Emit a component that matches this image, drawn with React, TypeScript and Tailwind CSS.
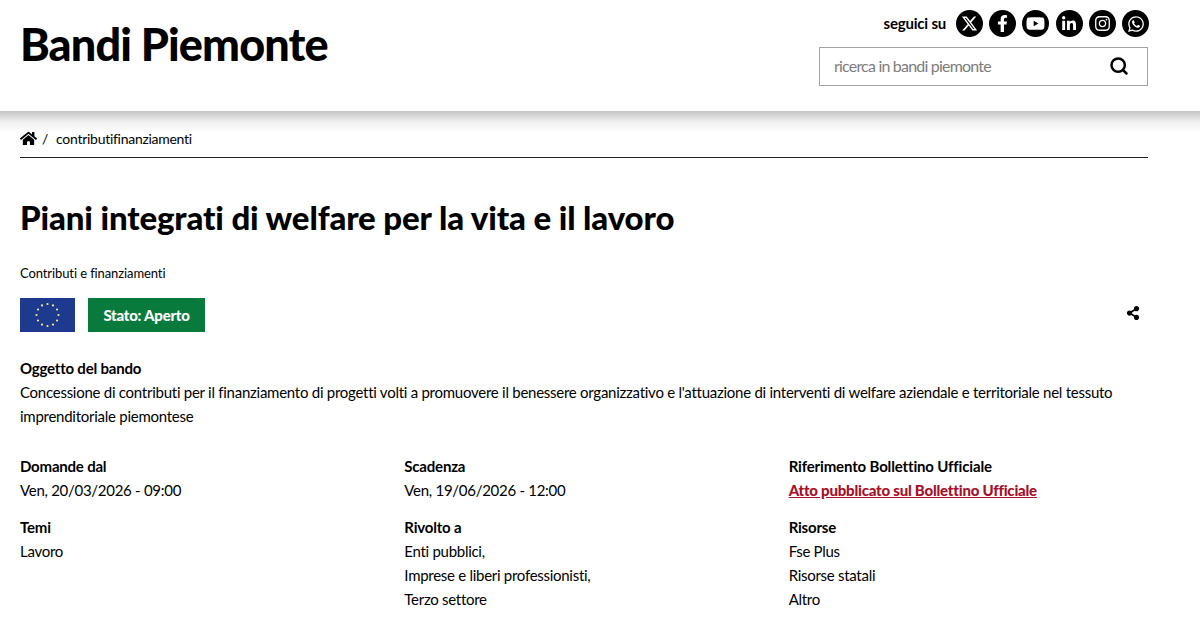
import React from 'react';
import { FaFacebookF, FaHome, FaInstagram, FaLinkedinIn, FaShareAlt, FaWhatsapp, FaYoutube } from 'react-icons/fa';
import { FaXTwitter } from 'react-icons/fa6';
import { Search } from 'lucide-react';

const socials = [
  { name: 'X', icon: <FaXTwitter size={17} /> },
  { name: 'Facebook', icon: <FaFacebookF size={17} /> },
  { name: 'YouTube', icon: <FaYoutube size={19} /> },
  { name: 'LinkedIn', icon: <FaLinkedinIn size={16} /> },
  { name: 'Instagram', icon: <FaInstagram size={17} /> },
  { name: 'WhatsApp', icon: <FaWhatsapp size={18} /> },
];

const EuFlag: React.FC = () => {
  const stars = Array.from({ length: 12 }, (_, i) => {
    const a = (i * Math.PI) / 6;
    return { x: 27.5 + 11 * Math.sin(a), y: 17 - 11 * Math.cos(a) };
  });
  return (
    <svg width="55" height="34" viewBox="0 0 55 34" className="block">
      <rect width="55" height="34" fill="#1d3a8f" />
      {stars.map((s, i) => (
        <circle key={i} cx={s.x} cy={s.y} r="1.1" fill="#f7eb8a" />
      ))}
    </svg>
  );
};

const Field: React.FC<{ label: string; lines: string[] }> = ({ label, lines }) => (
  <div>
    <div className="font-bold leading-6 tracking-[-0.2px]">{label}</div>
    {lines.map((line) => (
      <div key={line} className="leading-6 tracking-[-0.28px]">{line}</div>
    ))}
  </div>
);

export default function App() {
  return (
    <div className="h-[642px] overflow-hidden bg-white text-[15px] text-black font-['Lato','Liberation_Sans',sans-serif]">
      <header className="h-[111px] px-5 flex justify-between bg-white">
        <h1 className="mt-[14px] text-[45px] leading-[60px] font-black tracking-[-0.9px]">Bandi Piemonte</h1>
        <div className="w-[330px] mr-[32px] pt-[10px] flex flex-col items-end">
          <div className="flex items-center h-[27px] -mr-px">
            <span className="mr-[10px] text-[15px] font-bold tracking-[-0.2px]">seguici su</span>
            <div className="flex gap-[6.2px]">
              {socials.map((s) => (
                <a key={s.name} href="#" aria-label={s.name} className="w-[27px] h-[27px] rounded-full bg-black text-white flex items-center justify-center">
                  {s.icon}
                </a>
              ))}
            </div>
          </div>
          <div className="mt-[10px] w-[329px] h-[39px] border border-[#a3a3a3] pl-[14px] pr-[18px] pb-[2px] flex items-center justify-between">
            <span className="text-[16px] tracking-[-0.8px] text-[#7d7d7d]">ricerca in bandi piemonte</span>
            <Search size={20} strokeWidth={3} />
          </div>
        </div>
      </header>

      <div className="h-[22px] bg-gradient-to-b from-[#c4c4c4] via-[#f0f0f0] to-white" />

      <main className="px-5 -mt-[4px] w-[1168px]">
        <div className="h-[20px] flex items-center text-[14px] pb-px tracking-[-0.28px]">
          <FaHome size={17} />
          <span className="ml-[5px]">/</span>
          <span className="ml-[8px]">contributifinanziamenti</span>
        </div>
        <div className="mt-[8px] border-b border-[#222]" />

        <h2 className="mt-[37px] text-[33px] leading-[44px] font-black tracking-[-0.14px]">Piani integrati di welfare per la vita e il lavoro</h2>

        <div className="mt-[24px] text-[13px] leading-5 tracking-[-0.1px]">Contributi e finanziamenti</div>

        <div className="mt-[15px] flex items-center justify-between">
          <div className="flex items-center gap-[13px]">
            <EuFlag />
            <span className="h-[34px] w-[117px] flex items-center justify-center bg-[#087a3c] text-white font-black tracking-[-0.25px]">Stato: Aperto</span>
          </div>
          <FaShareAlt size={14} className="mr-[8px] -mt-[4px]" />
        </div>

        <div className="mt-[24px]">
          <div className="font-bold leading-6 tracking-[-0.2px]">Oggetto del bando</div>
          <p className="leading-6 tracking-[-0.26px]">
            Concessione di contributi per il finanziamento di progetti volti a promuovere il benessere organizzativo e l'attuazione di interventi di welfare aziendale e territoriale nel tessuto imprenditoriale piemontese
          </p>
        </div>

        <div className="mt-[26px] grid grid-cols-3 gap-x-[25px] gap-y-[13px]">
          <Field label="Domande dal" lines={['Ven, 20/03/2026 - 09:00']} />
          <Field label="Scadenza" lines={['Ven, 19/06/2026 - 12:00']} />
          <div>
            <div className="font-bold leading-6 tracking-[-0.15px]">Riferimento Bollettino Ufficiale</div>
            <a href="#" className="font-black leading-6 tracking-[-0.22px] text-[#a80f28] underline">Atto pubblicato sul Bollettino Ufficiale</a>
          </div>
          <Field label="Temi" lines={['Lavoro']} />
          <Field label="Rivolto a" lines={['Enti pubblici,', 'Imprese e liberi professionisti,', 'Terzo settore']} />
          <Field label="Risorse" lines={['Fse Plus', 'Risorse statali', 'Altro']} />
        </div>
      </main>
    </div>
  );
}
